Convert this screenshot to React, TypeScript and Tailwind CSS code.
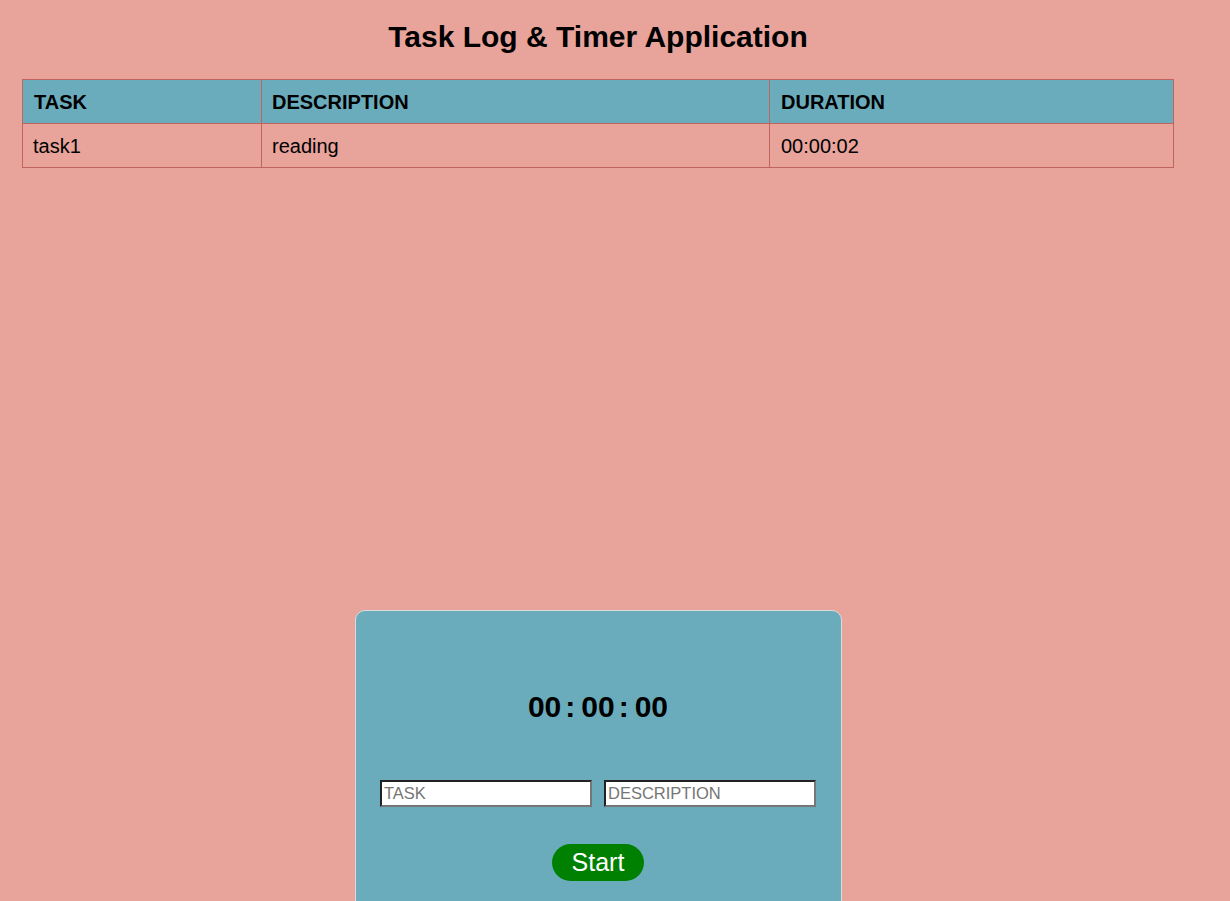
export default function App() {
  return (
    <div className="min-h-[901px] bg-[#e8a39b] font-['Liberation_Sans',Arial,sans-serif] text-black overflow-hidden">
      <div className="w-[1196px] flex flex-col items-center">
        <h1 className="mt-[19px] text-[30px] leading-[36px] font-bold">Task Log &amp; Timer Application</h1>
        <table className="mt-[24px] ml-[22px] self-start w-[1152px] border-collapse text-[20px]">
          <thead>
            <tr className="bg-[#6aacbc] h-[44px]">
              <th className="w-[239px] border border-[#c0645f] text-left font-bold px-[11px]">TASK</th>
              <th className="w-[508px] border border-[#c0645f] text-left font-bold px-[10px]">DESCRIPTION</th>
              <th className="border border-[#c0645f] text-left font-bold px-[11px]">DURATION</th>
            </tr>
          </thead>
          <tbody>
            <tr className="h-[44px]">
              <td className="border border-[#c0645f] px-[10px]">task1</td>
              <td className="border border-[#c0645f] px-[10px]">reading</td>
              <td className="border border-[#c0645f] px-[11px]">00:00:02</td>
            </tr>
          </tbody>
        </table>
        <div className="mt-[442px] w-[487px] h-[320px] bg-[#6aacbc] border border-[#dcdcdc] rounded-[10px] flex flex-col items-center">
          <div className="mt-[78px] flex text-[30px] leading-[36px] font-bold">
            <span>00</span>
            <span className="ml-[4px] mr-[6px]">:</span>
            <span>00</span>
            <span className="ml-[4px] mr-[6px]">:</span>
            <span>00</span>
          </div>
          <div className="mt-[55px] flex gap-[12px]">
            <input
              placeholder="TASK"
              className="w-[212px] h-[27px] bg-white border-2 border-t-[#222] border-l-[#222] border-b-[#767676] border-r-[#767676] px-[2px] text-[16.5px] placeholder:text-[#757575] outline-none"
            />
            <input
              placeholder="DESCRIPTION"
              className="w-[212px] h-[27px] bg-white border-2 border-t-[#222] border-l-[#222] border-b-[#767676] border-r-[#767676] px-[2px] text-[16.5px] placeholder:text-[#757575] outline-none"
            />
          </div>
          <button className="mt-[37px] w-[92px] h-[37px] rounded-full bg-[#008000] text-white text-[25px] leading-[37px]">
            Start
          </button>
        </div>
      </div>
    </div>
  );
}
